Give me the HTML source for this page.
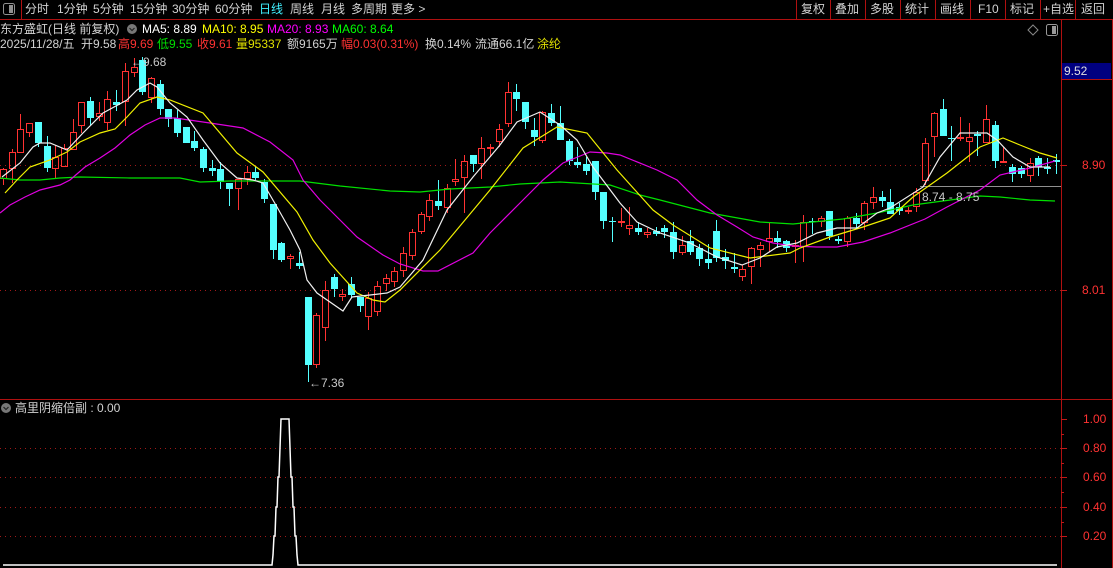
<!DOCTYPE html>
<html><head><meta charset="utf-8"><style>
html,body{margin:0;padding:0;background:#000;width:1113px;height:568px;overflow:hidden}
body{position:relative;font-family:"Liberation Sans","Noto Sans CJK SC",sans-serif;font-size:12px;color:#d2d2d2}
.t{position:absolute;white-space:nowrap;line-height:14px}
svg{position:absolute;left:0;top:0}
</style></head><body>
<svg width="1113" height="568" id="s">
<line x1="0" y1="19.5" x2="1113" y2="19.5" stroke="#b01010"/>
<line x1="21.5" y1="0" x2="21.5" y2="19" stroke="#b01010"/>
<g stroke="#b01010"><line x1="796.5" y1="0" x2="796.5" y2="19"/><line x1="830.5" y1="0" x2="830.5" y2="19"/><line x1="865.5" y1="0" x2="865.5" y2="19"/><line x1="900.5" y1="0" x2="900.5" y2="19"/><line x1="935.5" y1="0" x2="935.5" y2="19"/><line x1="970.5" y1="0" x2="970.5" y2="19"/><line x1="1005.5" y1="0" x2="1005.5" y2="19"/><line x1="1040.5" y1="0" x2="1040.5" y2="19"/><line x1="1075.5" y1="0" x2="1075.5" y2="19"/></g>
<line x1="1061.5" y1="19" x2="1061.5" y2="568" stroke="#b01010"/>
<line x1="1112.5" y1="19" x2="1112.5" y2="568" stroke="#b01010"/>
<line x1="0" y1="399.5" x2="1113" y2="399.5" stroke="#b01010"/>
<rect x="3.5" y="3.5" width="11" height="11" rx="2" fill="none" stroke="#909090"/><rect x="9" y="5" width="4" height="8" fill="#909090"/>
<path d="M1033 25 L1038 30 L1033 35 L1028 30 Z" fill="none" stroke="#888"/>
<rect x="1046.5" y="24.5" width="11" height="11" rx="2" fill="none" stroke="#999"/><rect x="1052" y="26" width="4" height="8" fill="#999"/>
<g stroke="#a01818" stroke-dasharray="1 4">
<line x1="0" y1="165.5" x2="1061" y2="165.5"/><line x1="0" y1="290.5" x2="1061" y2="290.5"/>
<line x1="0" y1="448.5" x2="1061" y2="448.5"/><line x1="0" y1="477.5" x2="1061" y2="477.5"/><line x1="0" y1="507.5" x2="1061" y2="507.5"/><line x1="0" y1="536.5" x2="1061" y2="536.5"/>
</g>
<g stroke="#c01818"><line x1="1061" y1="165.5" x2="1067" y2="165.5"/><line x1="1061" y1="290.5" x2="1067" y2="290.5"/>
<line x1="1061" y1="419.5" x2="1067" y2="419.5"/><line x1="1061" y1="448.5" x2="1067" y2="448.5"/><line x1="1061" y1="477.5" x2="1067" y2="477.5"/><line x1="1061" y1="507.5" x2="1067" y2="507.5"/><line x1="1061" y1="536.5" x2="1067" y2="536.5"/>
<line x1="1061" y1="434.5" x2="1064" y2="434.5"/><line x1="1061" y1="463.5" x2="1064" y2="463.5"/><line x1="1061" y1="492.5" x2="1064" y2="492.5"/><line x1="1061" y1="522.5" x2="1064" y2="522.5"/></g>
<rect x="1062" y="63" width="49" height="16" fill="#000080"/>
<line x1="1062" y1="79.5" x2="1112" y2="79.5" stroke="#b01010"/>
<line x1="920" y1="186.5" x2="1061" y2="186.5" stroke="#909090"/>
<g id="candles"></g>
<g fill="none" stroke-width="1.2">
<polyline stroke="#00e000" points="0,178 20,180 40,180 60,178 80,177 130,178 180,178 200,182 230,181 300,181 340,186 390,191 420,192 450,189 490,187 520,184 560,182 610,185 640,195 660,200 710,213 760,222 793,224 843,219 877,213 913,205 980,196 1000,197 1030,200 1055,201"/>
<polyline stroke="#e000e0" points="0,213 10,205 25,197 40,190 60,185 70,180 85,167 100,158 115,148 130,135 145,125 160,118 175,118 210,123 243,128 270,142 293,160 303,180 320,200 337,217 357,237 383,255 400,264 423,271 438,271 473,253 490,233 523,200 543,180 563,163 590,152 607,153 620,155 657,170 677,180 697,200 717,215 737,227 753,237 773,243 793,246 817,247 837,247 863,242 890,233 925,219 947,207 980,190 1000,175 1030,168 1055,161"/>
<polyline stroke="#f0f000" points="5,193 17,180 30,167 50,160 67,152 80,142 100,133 115,129 127,117 140,103 157,97 170,100 203,113 237,153 263,172 297,212 313,240 330,263 357,293 373,300 385,302 400,290 440,250 490,190 523,148 557,127 587,133 617,170 653,210 673,225 710,248 750,258 790,253 800,248 830,237 863,227 890,218 913,197 947,173 980,147 1003,138 1020,145 1040,153 1057,158"/>
<polyline stroke="#f0f0f0" points="2,177 20,163 33,147 40,143 50,143 67,150 83,133 103,113 127,100 137,90 150,83 157,87 170,103 187,117 203,140 220,163 237,178 253,180 263,183 277,207 290,230 300,250 307,280 317,293 343,311 352,297 370,295 387,293 400,287 423,260 447,210 473,177 500,145 517,122 540,112 560,125 577,140 593,167 620,203 637,222 660,233 690,243 717,257 742,265 760,258 777,247 797,243 817,233 837,228 857,228 877,213 890,208 923,187 940,157 960,133 987,133 997,140 1013,157 1030,167 1050,167"/>
</g>
<text x="131" y="66" fill="#c8c8c8" font-size="12" font-family="Liberation Sans">←9.68</text>
<text x="309" y="387" fill="#c8c8c8" font-size="12" font-family="Liberation Sans">←7.36</text>
<text x="922" y="201" fill="#c8c8c8" font-size="12" font-family="Liberation Sans">8.74 - 8.75</text>
<polyline fill="none" stroke="#fff" stroke-width="1.5" points="3,565 272,565 273,555 274,536 275,536 276,507 277,507 278,477 279,477 280,448 281,419 289,419 290,448 291,477 292,477 293,507 294,507 295,536 296,536 297,555 298,565 1057,565"/>
<circle cx="6" cy="408" r="5" fill="#777"/><path d="M3.5 407 L6 409.5 L8.5 407" fill="none" stroke="#222" stroke-width="1.2"/>
<circle cx="132" cy="29" r="5" fill="#777"/><path d="M129.5 28 L132 30.5 L134.5 28" fill="none" stroke="#222" stroke-width="1.2"/>
</svg>
<div class="t" style="left:25px;top:2px">分时</div>
<div class="t" style="left:57px;top:2px">1分钟</div>
<div class="t" style="left:93px;top:2px">5分钟</div>
<div class="t" style="left:130px;top:2px">15分钟</div>
<div class="t" style="left:172px;top:2px">30分钟</div>
<div class="t" style="left:215px;top:2px">60分钟</div>
<div class="t" style="left:259px;top:2px;color:#40f0ff">日线</div>
<div class="t" style="left:290px;top:2px">周线</div>
<div class="t" style="left:321px;top:2px">月线</div>
<div class="t" style="left:351px;top:2px">多周期</div>
<div class="t" style="left:391px;top:2px">更多 &gt;</div>
<div class="t" style="left:801px;top:2px">复权</div>
<div class="t" style="left:835px;top:2px">叠加</div>
<div class="t" style="left:870px;top:2px">多股</div>
<div class="t" style="left:905px;top:2px">统计</div>
<div class="t" style="left:940px;top:2px">画线</div>
<div class="t" style="left:978px;top:2px">F10</div>
<div class="t" style="left:1010px;top:2px">标记</div>
<div class="t" style="left:1043px;top:2px">+自选</div>
<div class="t" style="left:1081px;top:2px">返回</div>
<div class="t" style="left:0;top:22px">东方盛虹(日线 前复权)</div>
<div class="t" style="left:142px;top:22px;color:#fff">MA5: 8.89</div>
<div class="t" style="left:202px;top:22px;color:#ffff00">MA10: 8.95</div>
<div class="t" style="left:267px;top:22px;color:#ff00ff">MA20: 8.93</div>
<div class="t" style="left:332px;top:22px;color:#00ff00">MA60: 8.64</div>
<div class="t" style="left:0;top:37px">2025/11/28/五</div>
<div class="t" style="left:81px;top:37px">开9.58</div>
<div class="t" style="left:118px;top:37px;color:#ff3232">高9.69</div>
<div class="t" style="left:157px;top:37px;color:#00e000">低9.55</div>
<div class="t" style="left:197px;top:37px;color:#ff3232">收9.61</div>
<div class="t" style="left:236px;top:37px;color:#e0e000">量95337</div>
<div class="t" style="left:287px;top:37px">额9165万</div>
<div class="t" style="left:341px;top:37px;color:#ff3232">幅0.03(0.31%)</div>
<div class="t" style="left:425px;top:37px">换0.14%</div>
<div class="t" style="left:475px;top:37px">流通66.1亿</div>
<div class="t" style="left:537px;top:37px;color:#e0e000">涂纶</div>
<div class="t" style="left:1064px;top:64px;color:#e0e0e0">9.52</div>
<div class="t" style="left:1082px;top:158px;color:#ff3232">8.90</div>
<div class="t" style="left:1082px;top:283px;color:#ff3232">8.01</div>
<div class="t" style="left:1083px;top:412px;color:#ff3232">1.00</div>
<div class="t" style="left:1083px;top:441px;color:#ff3232">0.80</div>
<div class="t" style="left:1083px;top:470px;color:#ff3232">0.60</div>
<div class="t" style="left:1083px;top:500px;color:#ff3232">0.40</div>
<div class="t" style="left:1083px;top:529px;color:#ff3232">0.20</div>
<div class="t" style="left:15px;top:401px">高里阴缩倍副 : 0.00</div>
<script>
var d=[[179,169,168,185],[169,152,149,183],[153,129,114,153],[133,123,123,137],[122,143,122,147],[146,168,136,172],[169,157,145,178],[167,148,144,167],[150,132,119,150],[126,102,102,133],[101,118,97,125],[117,113,102,121],[123,99,91,130],[102,105,90,111],[102,71,63,126],[73,67,58,77],[60,92,57,95],[98,78,77,103],[84,109,80,115],[109,119,109,127],[118,133,110,137],[127,143,127,143],[141,148,131,151],[149,168,147,172],[168,171,160,176],[169,182,162,189],[183,189,183,206],[189,179,179,210],[179,172,166,185],[172,178,166,180],[182,199,179,203],[204,250,204,259],[243,260,242,262],[259,256,254,269],[263,266,252,269],[297,365,297,382],[365,315,313,368],[328,290,281,341],[277,289,274,297],[297,294,289,301],[284,295,277,298],[297,306,297,312],[317,298,292,330],[312,286,281,316],[284,278,274,291],[282,271,267,287],[271,253,247,277],[256,232,229,260],[232,214,212,234],[217,200,194,221],[201,206,180,210],[208,188,184,213],[182,179,159,186],[178,161,155,213],[155,164,155,172],[164,148,137,179],[149,147,144,157],[142,129,124,147],[124,92,82,127],[92,99,84,111],[102,122,102,129],[130,137,118,146],[141,112,111,143],[113,123,104,126],[123,140,106,140],[141,161,139,165],[162,165,147,168],[164,171,157,175],[161,192,161,200],[192,221,192,229],[221,222,217,242],[223,221,208,227],[229,225,207,235],[228,232,222,235],[235,232,228,238],[231,234,227,236],[228,232,225,238],[232,252,222,259],[253,245,236,255],[241,252,230,255],[248,259,244,266],[259,263,244,269],[231,258,220,262],[257,261,249,269],[267,269,253,273],[277,269,265,281],[267,248,247,284],[250,245,242,267],[242,238,222,252],[238,242,231,248],[241,248,240,252],[247,245,240,263],[247,222,215,262],[221,222,218,234],[222,218,216,227],[211,236,211,240],[239,241,236,244],[242,218,216,247],[218,224,213,228],[223,203,201,230],[203,197,187,209],[197,201,191,207],[202,214,189,214],[207,211,203,215],[212,210,207,214],[207,192,188,212],[181,143,138,185],[137,113,112,157],[109,136,99,136],[138,139,126,161],[139,137,117,141],[142,137,123,162],[134,136,131,156],[143,119,105,143],[125,161,121,168],[162,161,147,163],[167,174,164,182],[168,174,166,178],[176,163,158,182],[158,167,156,176],[167,169,158,174],[160,162,154,174]];
var g=document.getElementById('candles'),h='';
for(var i=0;i<d.length;i++){var x=Math.round(3+8.7*i),o=d[i][0],c=d[i][1],hi=d[i][2],lo=d[i][3];
if(c<o){h+='<line x1="'+(x+0.5)+'" y1="'+hi+'" x2="'+(x+0.5)+'" y2="'+c+'" stroke="#ff3232"/><line x1="'+(x+0.5)+'" y1="'+o+'" x2="'+(x+0.5)+'" y2="'+lo+'" stroke="#ff3232"/><rect x="'+(x-2.5)+'" y="'+(c+0.5)+'" width="6" height="'+Math.max(o-c-1,1)+'" fill="none" stroke="#ff3232"/>';}
else{h+='<line x1="'+(x+0.5)+'" y1="'+hi+'" x2="'+(x+0.5)+'" y2="'+lo+'" stroke="#54ffff"/><rect x="'+(x-3)+'" y="'+o+'" width="7" height="'+Math.max(c-o,1)+'" fill="#54ffff"/>';}}
g.innerHTML=h;
</script>
</body></html>
